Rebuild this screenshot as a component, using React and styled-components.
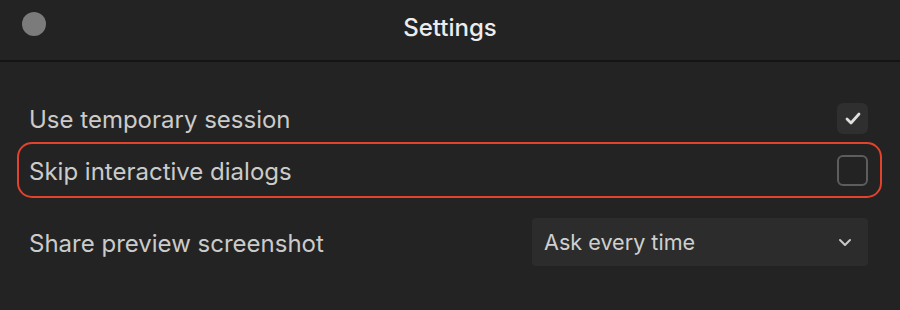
import styled, { createGlobalStyle } from "styled-components";

const GlobalStyle = createGlobalStyle`
  html, body {
    margin: 0;
    padding: 0;
    background: #232323;
  }
  body {
    font-family: Inter, "Noto Sans", sans-serif;
  }
`;

const Window = styled.div`
  width: 900px;
  height: 310px;
  background: #232323;
  display: flex;
  flex-direction: column;
`;

const TitleBar = styled.div`
  height: 60px;
  border-bottom: 2px solid #141414;
  display: flex;
  align-items: center;
  position: relative;
  justify-content: center;
`;

const Dot = styled.span`
  position: absolute;
  left: 22px;
  top: 12px;
  width: 24px;
  height: 24px;
  border-radius: 50%;
  background: #7b7b7b;
`;

const Title = styled.h1`
  margin: 0 0 6px 0;
  font-size: 24px;
  font-weight: 500;
  color: #ececec;
`;

const List = styled.div`
  display: flex;
  flex-direction: column;
  padding: 30px 20px 0 19px;
`;

const Row = styled.div`
  height: 52px;
  display: flex;
  align-items: center;
  justify-content: space-between;
  padding: 0 12px 0 10px;
  border-radius: 13px;
  margin-top: ${(p) => p.$gap || 0}px;
  box-shadow: ${(p) => (p.$highlight ? "0 0 0 2px #e1432c" : "none")};
`;

const Label = styled.span`
  font-size: 24px;
  color: #cbcbcb;
  padding-top: 2px;
`;

const Box = styled.span`
  width: 31px;
  height: 31px;
  box-sizing: border-box;
  border-radius: 6px;
  display: flex;
  align-items: center;
  justify-content: center;
  background: ${(p) => (p.$checked ? "#2f2f2f" : "transparent")};
  border: ${(p) => (p.$checked ? "none" : "2px solid #5d5d5d")};
`;

const Select = styled.div`
  width: 336px;
  height: 48px;
  box-sizing: border-box;
  background: #2c2c2c;
  border-radius: 4px;
  display: flex;
  align-items: center;
  justify-content: space-between;
  padding: 0 16px 0 12px;
  font-size: 21.6px;
  color: #cfcfcf;
`;

const Check = () => (
  <svg width="16" height="13" viewBox="0 0 16 13" fill="none">
    <path d="M2 7l4 4 8-9" stroke="#dedede" strokeWidth="2.8" strokeLinecap="round" strokeLinejoin="round" />
  </svg>
);

const Chevron = () => (
  <svg width="14" height="9" viewBox="0 0 14 9" fill="none">
    <path d="M2 2l5 5 5-5" stroke="#c8c8c8" strokeWidth="2" strokeLinecap="round" strokeLinejoin="round" />
  </svg>
);

export default function App() {
  return (
    <Window>
      <GlobalStyle />
      <TitleBar>
        <Dot />
        <Title>Settings</Title>
      </TitleBar>
      <List>
        <Row>
          <Label>Use temporary session</Label>
          <Box $checked>
            <Check />
          </Box>
        </Row>
        <Row $highlight>
          <Label>Skip interactive dialogs</Label>
          <Box />
        </Row>
        <Row $gap={20}>
          <Label>Share preview screenshot</Label>
          <Select>
            <span>Ask every time</span>
            <Chevron />
          </Select>
        </Row>
      </List>
    </Window>
  );
}
